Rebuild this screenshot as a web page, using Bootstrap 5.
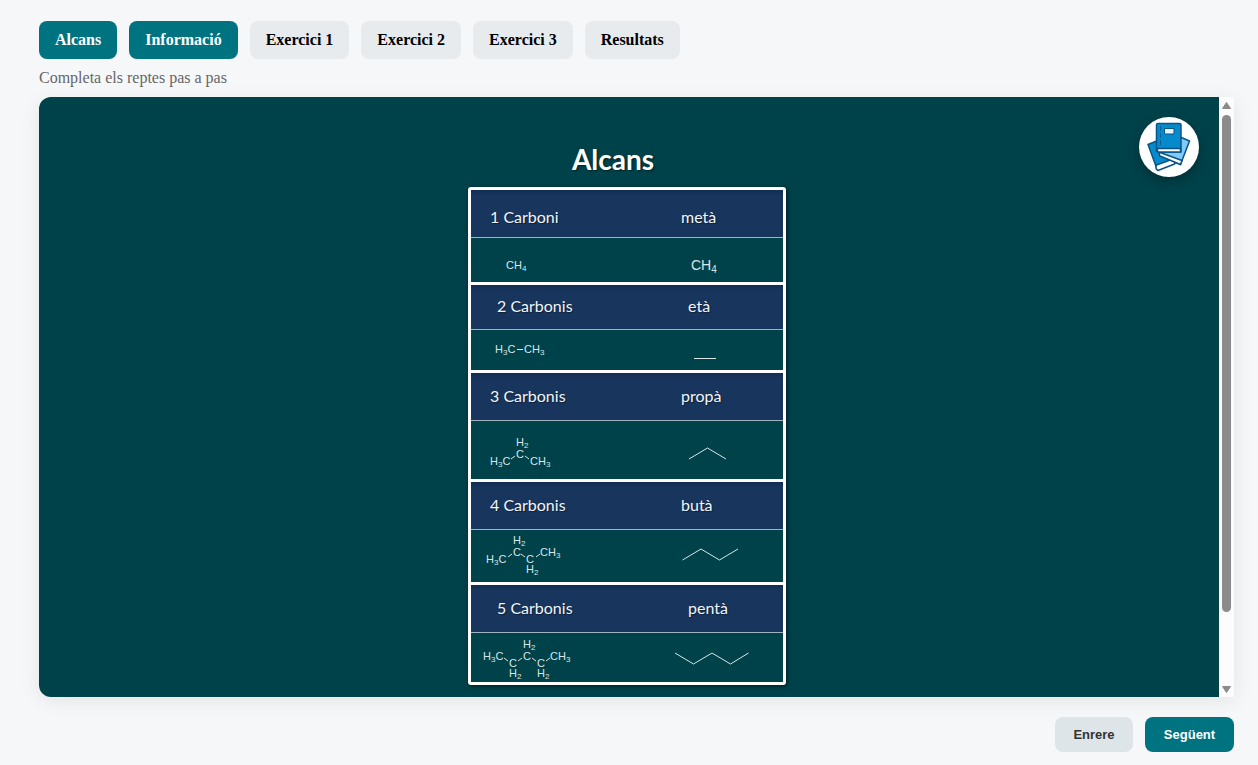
<!DOCTYPE html>
<html lang="ca">
<head>
<meta charset="utf-8">
<meta name="viewport" content="width=device-width, initial-scale=1">
<title>Alcans</title>
<link rel="stylesheet" href="https://cdn.jsdelivr.net/npm/bootstrap@5.3.0/dist/css/bootstrap.min.css">
<style>
  :root { --teal: #007381; --deep: #00424a; --navy: #18355e; }
  body { background: #f6f7f9; font-family: "Liberation Serif", serif; }
  .page-shell { padding: 21px 24px 13px 39px; }
  .steps { gap: 12px; }
  .step-btn { --bs-btn-padding-x: 16px; --bs-btn-padding-y: 10px; --bs-btn-font-size: 16px; --bs-btn-line-height: 18px;
    --bs-btn-font-weight: 700; --bs-btn-border-radius: 8px; --bs-btn-border-width: 0; --bs-btn-color: #000; --bs-btn-bg: #e8ebee;
    --bs-btn-hover-bg: #dde2e6; --bs-btn-active-bg: var(--teal); --bs-btn-active-color: #fff; font-family: inherit; }
  .intro { font-size: 16px; line-height: 22px; color: #666; margin: 8px 0; }
  .stage { min-height: 300px; border-radius: 12px 0 0 12px; box-shadow: 0 4px 20px rgba(0,0,0,.08); }
  .stage-view { background: var(--deep); border-radius: 12px 0 0 12px; padding: 44px 4px 0 0; }
  .chart { width: 318px; }
  .chart-title { font: 700 28px/36px Lato, sans-serif; color: #fff; text-shadow: 1px 1px 2px rgba(0,0,0,.5); margin: 0; padding: 0 28px 10px 0; }
  .alkanes { width: 318px; border: 3px solid #fff; border-collapse: separate; border-spacing: 0; border-radius: 3px; table-layout: fixed;
    color: #f2f5f7; box-shadow: 1px 1px 4px rgba(0,0,0,.6); }
  .alkanes th, .alkanes td { padding: 0; text-align: left; }
  .alkanes th { height: 51px; padding: 0 0 2px 19px; background: linear-gradient(#132c50, var(--navy) 5px); border-top: 3px solid #fff;
    border-bottom: 1px solid #9fb4bc; font: 400 16px/20px Lato, sans-serif; text-shadow: 1px 1px 1px rgba(0,0,0,.4); }
  .alkanes .low th { height: 48px; }
  .alkanes .inset th { padding-left: 26px; }
  .alkanes tbody:first-of-type th { border-top: 0; padding-top: 6px; padding-bottom: 0; }
  .alkanes svg { display: block; width: 100%; font: 11px "Liberation Sans", Arial, sans-serif; fill: #d9e6e8; stroke-width: 1; }
  .alkanes path { fill: none; stroke: #d9e6e8; }
  .alkanes .sub { font-size: 8px; }
  .book-btn { top: 20px; right: 20px; width: 60px; height: 60px; box-shadow: 0 4px 12px rgba(0,0,0,.3); }
  .rail { width: 15px; background: #fcfcfc; padding: 5px 3px 4px; gap: 6px; }
  .rail-thumb { height: 88%; border-radius: 5px; background: #8b8b8b; }
  .nav-row { gap: 12px; padding-top: 20px; }
  .move-btn { --bs-btn-padding-x: 18px; --bs-btn-padding-y: 10px; --bs-btn-font-size: 13px; --bs-btn-line-height: 15px; --bs-btn-font-weight: 700;
    --bs-btn-border-radius: 8px; --bs-btn-border-width: 0; font-family: "Liberation Sans", Arial, sans-serif; }
  .move-back { min-width: 78px; --bs-btn-bg: #dee5e8; --bs-btn-color: #333; --bs-btn-hover-bg: #d0d9dd; }
  .move-next { min-width: 89px; --bs-btn-bg: var(--teal); --bs-btn-color: #fff; --bs-btn-hover-bg: #006270; --bs-btn-hover-color: #fff; }
</style>
</head>
<body>
<div class="page-shell vh-100 d-flex flex-column">
  <nav class="steps d-flex flex-wrap" aria-label="Passos">
    <button type="button" class="btn step-btn active">Alcans</button>
    <button type="button" class="btn step-btn active">Informació</button>
    <button type="button" class="btn step-btn">Exercici 1</button>
    <button type="button" class="btn step-btn">Exercici 2</button>
    <button type="button" class="btn step-btn">Exercici 3</button>
    <button type="button" class="btn step-btn">Resultats</button>
  </nav>
  <p class="intro">Completa els reptes pas a pas</p>

  <main class="stage d-flex flex-grow-1">
    <div class="stage-view position-relative flex-grow-1 overflow-hidden">
      <section class="chart mx-auto">
        <h1 class="chart-title text-center">Alcans</h1>
        <table class="alkanes">
          <colgroup><col style="width:191px"><col></colgroup>
          <tbody class="low">
            <tr><th>1 Carboni</th><th>metà</th></tr>
            <tr>
              <td><svg height="44" viewBox="471 238 191 44"><text x="506" y="269">CH<tspan class="sub" dy="2">4</tspan></text></svg></td>
              <td><svg height="44" viewBox="662 238 121 44"><text x="691" y="270" font-size="14">CH<tspan font-size="10" dy="3">4</tspan></text></svg></td>
            </tr>
          </tbody>
          <tbody class="low inset">
            <tr><th>2 Carbonis</th><th>età</th></tr>
            <tr>
              <td><svg height="40" viewBox="471 330 191 40"><text x="495" y="353">H<tspan class="sub" dy="2">3</tspan><tspan dy="-2">C</tspan></text><path d="M517 349.500h6"/><text x="524" y="353">CH<tspan class="sub" dy="2">3</tspan></text></svg></td>
              <td><svg height="40" viewBox="662 330 121 40"><path d="M694 358.500h22"/></svg></td>
            </tr>
          </tbody>
          <tbody>
            <tr><th>3 Carbonis</th><th>propà</th></tr>
            <tr>
              <td><svg height="58" viewBox="471 421 191 58"><text x="516" y="446">H<tspan class="sub" dy="2">2</tspan></text><text x="516" y="458">C</text><text x="490" y="465">H<tspan class="sub" dy="2">3</tspan><tspan dy="-2">C</tspan></text><text x="530" y="465">CH<tspan class="sub" dy="2">3</tspan></text><path d="M511 459l4-3M525 456l4 3"/></svg></td>
              <td><svg height="58" viewBox="662 421 121 58"><path d="M689 459l18.500-11 18.500 11"/></svg></td>
            </tr>
          </tbody>
          <tbody>
            <tr><th>4 Carbonis</th><th>butà</th></tr>
            <tr>
              <td><svg height="52" viewBox="471 530 191 52"><text x="513" y="544">H<tspan class="sub" dy="2">2</tspan></text><text x="513" y="556">C</text><text x="486" y="563">H<tspan class="sub" dy="2">3</tspan><tspan dy="-2">C</tspan></text><text x="526" y="563">C</text><text x="526" y="573">H<tspan class="sub" dy="2">2</tspan></text><text x="540" y="556">CH<tspan class="sub" dy="2">3</tspan></text><path d="M508 557l4-3M521 554l4 3M536 557l4-3"/></svg></td>
              <td><svg height="52" viewBox="662 530 121 52"><path d="M682.500 560l18.500-11 18.500 11 18.500-11"/></svg></td>
            </tr>
          </tbody>
          <tbody class="inset">
            <tr><th>5 Carbonis</th><th>pentà</th></tr>
            <tr>
              <td><svg height="49" viewBox="471 633 191 49"><text x="483" y="660">H<tspan class="sub" dy="2">3</tspan><tspan dy="-2">C</tspan></text><text x="509" y="667">C</text><text x="509" y="677">H<tspan class="sub" dy="2">2</tspan></text><text x="523" y="648">H<tspan class="sub" dy="2">2</tspan></text><text x="523" y="660">C</text><text x="537" y="667">C</text><text x="537" y="677">H<tspan class="sub" dy="2">2</tspan></text><text x="550" y="660">CH<tspan class="sub" dy="2">3</tspan></text><path d="M504 658l4 3M518 661l4-3M532 658l4 3M546 661l4-3"/></svg></td>
              <td><svg height="49" viewBox="662 633 121 49"><path d="M675 653l18.500 11 18.500-11 18.500 11 18-11"/></svg></td>
            </tr>
          </tbody>
        </table>
      </section>
      <button type="button" class="book-btn position-absolute rounded-circle border-0 bg-white p-0" aria-label="Teoria">
        <svg class="d-block" width="60" height="60" viewBox="0 0 60 60" stroke="#075487" stroke-width="1.500" stroke-linejoin="round">
          <path d="M9 27.500L30 19l8 23-20 10z" fill="#078acb"/>
          <path d="M17.500 48l18-6.500 3 1.500-3 4-16.500 6.500q-3-1.500-1.500-5.500z" fill="#fff"/>
          <path d="M34 17l16.500 7-9 23.500-20.500-9.500z" fill="#7fcafa"/>
          <path d="M21 35.500l22 8-1.500 4L21 39q-1.500-2 0-3.500z" fill="#fff"/>
          <path d="M19 6.500h21.500q1.500 0 1.500 1.500v27H19q-1.500 0-1.500-2V8Q17.500 6.500 19 6.500z" fill="#078acb"/>
          <path d="M19 31.500h22.500V35H19q-1.500-1.500 0-3.500z" fill="#fff"/>
          <path d="M21.500 9v21" stroke-width=".8" stroke-dasharray="5 2"/>
          <path d="M25.500 11.500h9.500v5.500h-9.500z" fill="#e6f3fb" stroke-width="1"/>
        </svg>
      </button>
    </div>
    <div class="rail d-flex flex-column align-items-center" aria-hidden="true">
      <svg class="flex-shrink-0" width="9" height="7" viewBox="0 0 9 7"><path d="M4.500 .5L8.500 6.500H.5z" fill="#8b8b8b" stroke="#8b8b8b" stroke-linejoin="round"/></svg>
      <div class="flex-grow-1 w-100"><div class="rail-thumb"></div></div>
      <svg class="flex-shrink-0" width="9" height="7" viewBox="0 0 9 7"><path d="M4.500 6.500L8.500 .5H.5z" fill="#8b8b8b" stroke="#8b8b8b" stroke-linejoin="round"/></svg>
    </div>
  </main>

  <div class="nav-row d-flex justify-content-end">
    <button type="button" class="btn move-btn move-back">Enrere</button>
    <button type="button" class="btn move-btn move-next">Següent</button>
  </div>
</div>
<script src="https://cdn.jsdelivr.net/npm/bootstrap@5.3.0/dist/js/bootstrap.bundle.min.js"></script>
</body>
</html>
